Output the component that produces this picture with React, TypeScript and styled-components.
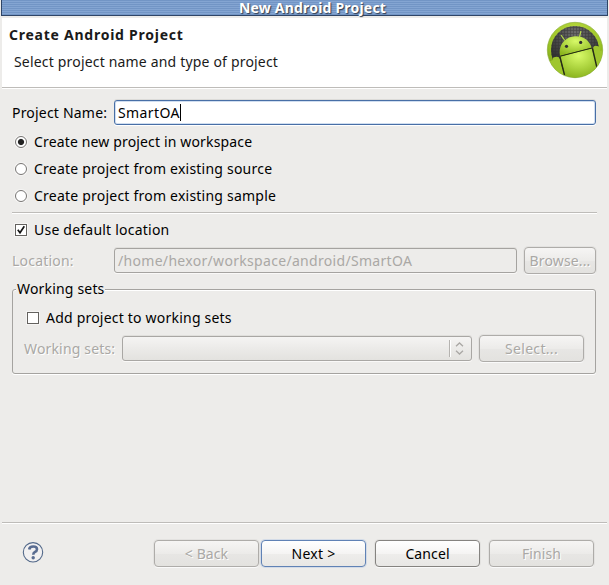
import React from "react";
import styled, { createGlobalStyle, css } from "styled-components";

const GlobalStyle = createGlobalStyle`
  * { box-sizing: border-box; }
  body {
    margin: 0;
    background: #edecea;
    font: 14px/20px "Noto Sans", "Open Sans", sans-serif;
    color: #000;
  }
`;

const Window = styled.div`
  display: flex;
  flex-direction: column;
  width: 609px;
  height: 585px;
  overflow: hidden;
  background: #edecea;
`;

const TitleBar = styled.div`
  display: flex;
  justify-content: center;
  height: 16px;
  margin: 0 1px;
  padding-left: 16px;
  border: solid #2f4566;
  border-width: 0 1px 1px;
  background: repeating-linear-gradient(#7295c5 0 1px, #84a5d2 1px 2px);
`;

const Title = styled.span`
  color: #fff;
  font-weight: 700;
  line-height: 16px;
  letter-spacing: 0.2px;
  text-shadow: 1px 1px 1px #303c50;
  white-space: nowrap;
`;

const Header = styled.header`
  display: flex;
  justify-content: space-between;
  height: 69px;
  margin: 2px 2px 0;
  padding: 3px 3px 0 7px;
  background: #fff;
`;

const Heading = styled.h1`
  margin: 4px 0 7px;
  color: #1a1a1a;
  font: inherit;
  font-weight: 700;
  letter-spacing: 0.75px;
`;

const Subheading = styled.p`
  margin: 0 0 0 5px;
  color: #1a1a1a;
  letter-spacing: 0.18px;
`;

const Rule = styled.div`
  flex: none;
  height: 2px;
  margin: 0 2px;
  background: linear-gradient(#bebcb9 50%, #fff 50%);
`;

const SectionRule = styled(Rule)`
  width: 585px;
  margin: 1px 0 0;
`;

const Content = styled.main`
  display: flex;
  flex: 1;
  flex-direction: column;
  padding: 10px 0 0 12px;
`;

const FieldRow = styled.div`
  display: flex;
  align-items: center;
  width: 584px;
  height: 27px;
`;

const GroupField = styled(FieldRow)`
  width: auto;
  margin-top: -2px;
  padding-left: 11px;
`;

const Label = styled.label<{ $width: number; $space?: number; $disabled?: boolean }>`
  width: ${(p) => p.$width}px;
  flex: none;
  letter-spacing: ${(p) => p.$space ?? 0.2}px;
  white-space: nowrap;
  ${(p) => p.$disabled && css`color: #aaa8a5; text-shadow: 1px 1px #fff;`}
`;

const TextField = styled.div<{ $disabled?: boolean }>`
  display: flex;
  align-items: center;
  flex: 1;
  height: 25px;
  padding: 0 0 0 3px;
  border: 1px solid #486fa6;
  border-radius: 3px;
  background: #fff;
  box-shadow: inset 0 0 0 1px #d0def0, 0 1px #fff, 0 -1px #dcdbd8;
  letter-spacing: 0.4px;
  white-space: nowrap;
  ${(p) => p.$disabled && css`
    border-color: #a5a3a0;
    background: #edecea;
    color: #aaa8a5;
    box-shadow: 0 1px #faf9f8, 0 -1px #e0dfdc;
    letter-spacing: 0.31px;
  `}
`;

const Caret = styled.span`
  width: 1px;
  height: 17px;
  background: #000;
`;

const ChoiceRow = styled.label<{ $height?: number; $indent?: number; $space?: number }>`
  display: flex;
  align-items: center;
  gap: 7px;
  height: ${(p) => p.$height ?? 27}px;
  padding-left: ${(p) => p.$indent ?? 3}px;
  letter-spacing: ${(p) => p.$space ?? 0.2}px;
  white-space: nowrap;
`;

const Radio = styled.span<{ $checked?: boolean }>`
  width: 12px;
  height: 12px;
  border: 1px solid #777573;
  border-radius: 50%;
  background: ${(p) => (p.$checked ? "radial-gradient(circle at 50%, #222 0 2.6px, #fff 3.6px)" : "#fff")};
  box-shadow: 0 0 0 1px #f6f5f4;
`;

const Box = styled.span`
  display: flex;
  width: 12px;
  height: 12px;
  border: 1px solid #64625f;
  background: #fff;
  box-shadow: 0 0 0 1px #f6f5f4;
`;

const LocationRow = styled(FieldRow)`
  margin-top: 2px;
`;

const Group = styled.section`
  display: flex;
  flex-direction: column;
  width: 584px;
  height: 85px;
  margin-top: 15px;
  border: 1px solid #a5a3a0;
  border-radius: 3px;
  box-shadow: 0 1px #fff, inset 0 1px #fff;
`;

const Legend = styled.h2`
  align-self: flex-start;
  height: 20px;
  margin: -11px 0 0 3px;
  padding: 0 0 0 1px;
  background: #edecea;
  font: inherit;
  letter-spacing: 0.18px;
`;

const Combo = styled.div`
  display: flex;
  align-items: center;
  justify-content: flex-end;
  width: 350px;
  height: 25px;
  border: 1px solid #a9a7a4;
  border-radius: 3px;
  background: linear-gradient(#f5f4f3, #ebeae8 52%, #e3e2df);
  box-shadow: 0 1px #faf9f8, 0 -1px #e0dfdc;
`;

const ComboArrow = styled.span`
  display: flex;
  align-items: center;
  justify-content: center;
  width: 22px;
  height: 17px;
  padding-right: 2px;
  border-left: 1px solid #b5b3b0;
  box-shadow: inset 1px 0 #fff;
`;

const Button = styled.button<{ $width: number; $gap?: number; $space?: number; $tone?: "default" | "disabled" }>`
  display: flex;
  flex: none;
  align-items: center;
  justify-content: center;
  width: ${(p) => p.$width}px;
  height: 27px;
  margin: 0 0 0 ${(p) => p.$gap ?? 0}px;
  padding: 0;
  border: 1px solid #858380;
  border-radius: 4px;
  background: linear-gradient(#fff, #f5f4f3 50%, #eeedeb 52%, #e8e7e5);
  box-shadow: 0 1px #fafafa, 0 0 0 1px rgba(0, 0, 0, 0.04);
  color: #000;
  font: inherit;
  letter-spacing: ${(p) => p.$space ?? 0.1}px;
  white-space: nowrap;
  ${(p) => p.$tone === "default" && css`
    border-color: #6082b5;
    box-shadow: 0 0 0 1px #d3dbe7;
  `}
  ${(p) => p.$tone === "disabled" && css`
    border-color: #aeaca9;
    background: linear-gradient(#f6f5f4, #ecebe9 50%, #e7e6e4 52%, #e3e2df);
    color: #aaa8a5;
    text-shadow: 1px 1px #fff;
  `}
`;

const Footer = styled.footer`
  display: flex;
  align-items: flex-start;
  height: 61px;
  padding: 16px 0 0 22px;
`;

const HelpIcon = styled.svg`
  flex: none;
  margin: 1px 109px 0 0;
`;

const Check = () => (
  <svg width="10" height="10" viewBox="0 0 10 10" fill="none">
    <path d="M1.8 4.8L4 7.7L8.3 1.3" stroke="#151515" strokeWidth="1.7" />
  </svg>
);

const AndroidLogo = () => (
  <svg width="58" height="58" viewBox="0 0 58 58">
    <defs>
      <radialGradient id="rim" cx="50%" cy="30%" r="72%">
        <stop offset="0" stopColor="#c9e552" />
        <stop offset="0.65" stopColor="#9bc325" />
        <stop offset="1" stopColor="#6d9212" />
      </radialGradient>
      <radialGradient id="body" cx="50%" cy="25%" r="75%">
        <stop offset="0" stopColor="#d8fa69" />
        <stop offset="0.5" stopColor="#b1d843" />
        <stop offset="1" stopColor="#8cb51f" />
      </radialGradient>
      <radialGradient id="dark" cx="50%" cy="25%" r="65%">
        <stop offset="0" stopColor="#6c6c6c" />
        <stop offset="1" stopColor="#303030" />
      </radialGradient>
      <pattern id="mesh" width="3" height="3" patternUnits="userSpaceOnUse">
        <path d="M0 .5H3M.5 0V3" stroke="#2e2e2e" strokeWidth=".7" opacity=".55" />
      </pattern>
      <clipPath id="disc"><circle cx="29" cy="29" r="27.5" /></clipPath>
      <clipPath id="inner"><circle cx="29" cy="29" r="24" /></clipPath>
    </defs>
    <circle cx="29" cy="29" r="27.7" fill="url(#rim)" stroke="#86a933" strokeWidth=".6" />
    <g clipPath="url(#inner)">
      <path d="M4 0H54V30L48 48H10L4 36Z" fill="url(#dark)" />
      <path d="M4 0H54V30L48 48H10L4 36Z" fill="url(#mesh)" />
    </g>
    <g clipPath="url(#disc)">
      <path d="M0 42L7 39Q6 36 9 36Q13 35 14 38L19 58H0ZM47 27Q48 24 51 25Q54 25 54 30L58 29V58H50Z" fill="#9fc62d" />
      <path d="M14 35.5L46 27.2L51 48Q42 56 29 57Q22 56 19 54Z" fill="url(#body)" />
      <path d="M14 36L18.5 54M46.5 27.5L51 47" stroke="#252b16" strokeWidth="1.4" fill="none" />
    </g>
    <path d="M14 35C12 25 18 17 27 15.5C36 14 43 18.5 45.7 26.8Z" fill="url(#body)" />
    <path d="M13.8 35.3L46 27" stroke="#26310c" strokeWidth="1" />
    <path d="M18.5 19L15.3 14.5M33.5 16L34.8 10.5" stroke="#b7dd48" strokeWidth="1.2" strokeLinecap="round" />
    <circle cx="20.5" cy="25.3" r="1.6" fill="#303030" />
    <circle cx="34.7" cy="21.4" r="1.6" fill="#303030" />
  </svg>
);

const App = () => (
  <>
    <GlobalStyle />
    <Window>
      <TitleBar><Title>New Android Project</Title></TitleBar>
      <Header>
        <div>
          <Heading>Create Android Project</Heading>
          <Subheading>Select project name and type of project</Subheading>
        </div>
        <AndroidLogo />
      </Header>
      <Rule />
      <Content>
        <FieldRow>
          <Label $width={102}>Project Name:</Label>
          <TextField>SmartOA<Caret /></TextField>
        </FieldRow>
        <div>
          <ChoiceRow $height={31} $space={0.15}><Radio $checked />Create new project in workspace</ChoiceRow>
          <ChoiceRow $height={23} $space={0.22}><Radio />Create project from existing source</ChoiceRow>
          <ChoiceRow $height={31} $space={0.22}><Radio />Create project from existing sample</ChoiceRow>
        </div>
        <SectionRule />
        <ChoiceRow $height={31} $space={0.22}>
          <Box><Check /></Box>Use default location
        </ChoiceRow>
        <LocationRow>
          <Label $width={102} $disabled>Location:</Label>
          <TextField $disabled>/home/hexor/workspace/android/SmartOA</TextField>
          <Button $width={72} $gap={7} $space={0.15} $tone="disabled" disabled>Browse...</Button>
        </LocationRow>
        <Group>
          <Legend>Working sets</Legend>
          <ChoiceRow $height={38} $indent={14} $space={0.21}><Box />Add project to working sets</ChoiceRow>
          <GroupField>
            <Label $width={98} $space={0.16} $disabled>Working sets:</Label>
            <Combo>
              <ComboArrow>
                <svg width="9" height="13" viewBox="0 0 9 13" fill="none" stroke="#aaa8a5" strokeWidth="1.3">
                  <path d="M1 4.2L4.5 1L8 4.2M1 8.8L4.5 12L8 8.8" />
                </svg>
              </ComboArrow>
            </Combo>
            <Button $width={105} $gap={7} $space={0.32} $tone="disabled" disabled>Select...</Button>
          </GroupField>
        </Group>
      </Content>
      <Rule />
      <Footer>
        <HelpIcon width="23" height="23" viewBox="0 0 23 23" fill="none">
          <circle cx="11" cy="11.3" r="9.7" fill="#f1f0f1" stroke="#526889" strokeWidth="1.1" />
          <path d="M7.2 8.5Q7.5 5.5 11.2 5.5Q15 5.5 15 8.2Q15 10 12.7 11.2Q11.3 12 11.3 13.8" stroke="#596c91" strokeWidth="2.6" />
          <circle cx="11.2" cy="16.8" r="1.7" fill="#596c91" />
        </HelpIcon>
        <Button $width={105} $tone="disabled" disabled>{"< Back"}</Button>
        <Button $width={105} $gap={2} $space={0.27} $tone="default">{"Next >"}</Button>
        <Button $width={105} $gap={9}>Cancel</Button>
        <Button $width={105} $gap={9} $tone="disabled" disabled>Finish</Button>
      </Footer>
    </Window>
  </>
);

export default App;
